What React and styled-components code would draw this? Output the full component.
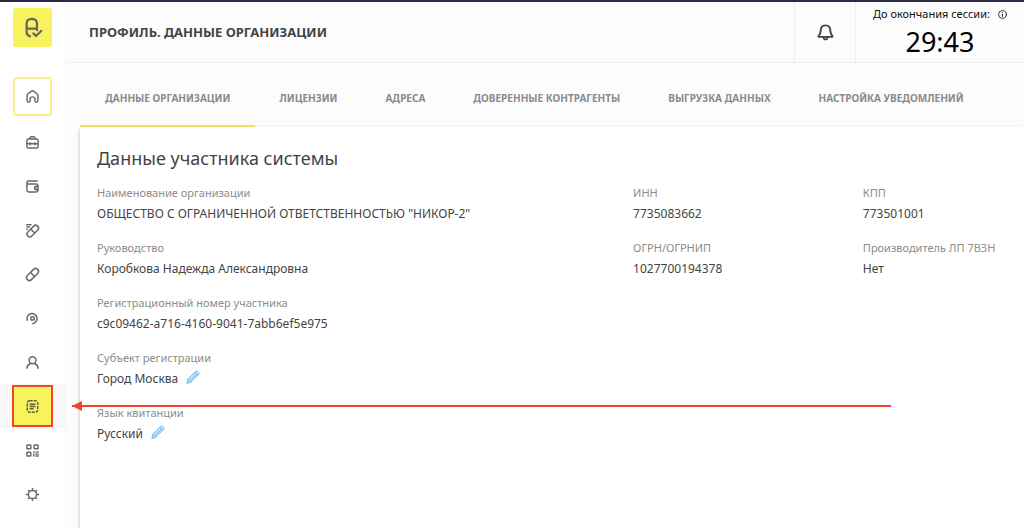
import styled, { createGlobalStyle } from 'styled-components';

const yellow = '#f8f25c';
const red = '#f0442c';
const line = '#eeeeee';

const GlobalStyle = createGlobalStyle`
    * {
        box-sizing: border-box;
    }
    body {
        margin: 0;
        background-color: #ffffff;
        color: #444444;
        font-family: 'Noto Sans', 'Open Sans', sans-serif;
        font-size: 12px;
    }
    button {
        font: inherit;
        color: inherit;
        background: none;
        border: 0;
        padding: 0;
        cursor: pointer;
    }
`;

const Page = styled.div`
    display: flex;
    min-height: 100vh;
    border-top: 2px solid #2c2a42;
    overflow: hidden;
`;

const Sidebar = styled.aside`
    flex: none;
    width: 65px;
    padding-top: 6px;
`;

const Logo = styled.a`
    display: flex;
    align-items: center;
    justify-content: center;
    width: 39px;
    height: 39px;
    margin: 0 auto 27px 13px;
    border-radius: 3px;
    background-color: ${yellow};
    color: #666666;
`;

const Nav = styled.nav`
    display: flex;
    flex-direction: column;
`;

const NavItem = styled.div`
    position: relative;
    display: flex;
    align-items: center;
    height: 44px;
    padding-left: 12px;
    background-color: ${({ $active }) => ($active ? '#f7f7f7' : 'transparent')};

    &:first-child {
        margin-bottom: 2px;
    }
`;

const NavButton = styled.button`
    display: flex;
    align-items: center;
    justify-content: center;
    width: 41px;
    height: 42px;
    color: #666a6e;

    &.home {
        width: 39px;
        height: 39px;
        margin-left: 1px;
        border: 1px solid ${yellow};
        box-shadow: inset 0 0 0 1px #faf590;
        border-radius: 3px;
    }

    &.marked {
        background-color: ${yellow};
        border: 2px solid ${red};
        color: #5c5c40;
    }
`;

const Arrow = styled.div`
    position: absolute;
    z-index: 2;
    top: 21px;
    left: 72px;
    width: 80vw;
    height: 2px;
    background-color: ${red};
    pointer-events: none;

    &::before {
        content: '';
        position: absolute;
        top: -4px;
        left: 0;
        border: 5px solid transparent;
        border-left: 0;
        border-right: 10px solid ${red};
    }
`;

const Main = styled.main`
    flex: 1;
    min-width: 0;
    display: flex;
    flex-direction: column;
    background-color: #fcfcfc;
    border-left: 1px solid #f7f7f7;
`;

const Header = styled.header`
    display: flex;
    height: 61px;
    border-bottom: 1px solid ${line};
`;

const PageTitle = styled.h1`
    flex: 1;
    align-self: center;
    margin: 0;
    padding-left: 23px;
    font-size: 13px;
    font-weight: 700;
`;

const BellButton = styled.button`
    display: flex;
    align-items: center;
    justify-content: center;
    width: 62px;
    border-left: 1px solid ${line};
    border-right: 1px solid ${line};
    color: #444444;
`;

const Session = styled.div`
    display: flex;
    flex-direction: column;
    align-items: center;
    width: 168px;
    padding-top: 4px;
    color: #111111;
`;

const SessionLabel = styled.div`
    display: flex;
    align-items: center;
    gap: 8px;
    font-size: 11px;
    line-height: 16px;
`;

const Timer = styled.time`
    font-size: 27px;
    line-height: 40px;
    color: #000000;
`;

const Tabs = styled.div`
    display: flex;
    height: 64px;
    padding-left: 14px;
`;

const Tab = styled.button`
    padding: 8px 24px 0;
    border-bottom: 2px solid ${({ $active }) => ($active ? '#f5e75a' : 'transparent')};
    color: #8a8a8a;
    font-size: 10px;
    font-weight: 700;
    white-space: nowrap;

    &:first-child {
        padding-left: 25px;
        padding-right: 25px;
    }
`;

const Card = styled.section`
    flex: 1;
    margin-left: 14px;
    padding: 18px 8px 0 17px;
    background-color: #ffffff;
    box-shadow: 0 2px 4px rgba(0, 0, 0, 0.25);
`;

const CardTitle = styled.h2`
    margin: 0 0 14px;
    font-size: 18px;
    font-weight: 400;
    line-height: 26px;
`;

const Fields = styled.dl`
    display: grid;
    grid-template-columns: 7fr 3fr 2fr;
    row-gap: 16px;
    margin: 0;
`;

const Field = styled.div`
    grid-column-start: ${({ $column }) => $column};
    white-space: nowrap;
`;

const Label = styled.dt`
    color: #8c8c8c;
    font-size: 11px;
    line-height: 16px;
`;

const Value = styled.dd`
    display: flex;
    align-items: center;
    gap: 8px;
    margin: 0;
    padding-top: 3px;
    line-height: 20px;
`;

const EditButton = styled.button`
    display: flex;
    padding-bottom: 4px;
`;

const Icon = styled.svg.attrs({
    fill: 'none',
    stroke: 'currentColor',
    strokeLinecap: 'round',
    strokeLinejoin: 'round',
    'aria-hidden': true,
})`
    display: block;
    overflow: visible;
    stroke-width: ${({ $stroke }) => $stroke || 1.6};
`;

const PencilIcon = styled(Icon)`
    color: #5fb0ee;
`;

const icons = {
    home: <path d="M1.2 5.8Q1.2 4.9 1.9 4.3L5.9 1.2Q7 .4 8.1 1.2L12.1 4.3Q12.8 4.9 12.8 5.8V11.3Q12.8 13.1 11.2 13.1Q9.6 13.1 9.6 11.3V9.6Q9.6 7.4 7 7.4Q4.4 7.4 4.4 9.6V11.3Q4.4 13.1 2.8 13.1Q1.2 13.1 1.2 11.3Z" />,
    briefcase: (
        <>
            <rect x="1" y="3.2" width="12" height="9.8" rx="1.8" />
            <path d="M4.4 3V2.4Q4.4 .8 5.8 .8H8.2Q9.6 .8 9.6 2.4V3M1.2 8.4H12.8M4.3 7.3V9.5M9.7 7.3V9.5" />
        </>
    ),
    wallet: (
        <>
            <path d="M12 1.2H2.7Q1 1.2 1 2.8V11Q1 12.8 2.9 12.8H11.1Q12.9 12.8 12.9 11V6Q12.9 4.3 11.1 4.3H2.5Q1 4.2 1 2.8" />
            <path d="M12.7 6.8H10.9Q9 6.9 9 8.6Q9 10.3 10.9 10.4H12.7M11 8.6H11.1" />
        </>
    ),
    pillFast: (
        <>
            <rect x="-.2" y="4.6" width="15" height="6" rx="3" transform="rotate(-45 7.3 7.6)" />
            <path d="M5.3 5.6L9.3 9.6M.9 .9H5.4M.9 3.3H3.6M.9 5.7H1.4" />
        </>
    ),
    pill: (
        <>
            <rect x="-.8" y="3.9" width="15.6" height="6.2" rx="3.1" transform="rotate(-45 7 7)" />
            <path d="M4.9 4.9L9.1 9.1" />
        </>
    ),
    rotate: (
        <>
            <path d="M1.4 8.8A5.4 5.4 0 1 1 7.4 12.4M1.4 8.8V9" />
            <rect x="5.3" y="5.3" width="3.4" height="3.4" rx=".4" />
        </>
    ),
    user: (
        <>
            <circle cx="7" cy="4.6" r="3.7" />
            <path d="M1 13.2C1 10.8 2.5 9.2 4.7 8.1M13 13.2C13 10.8 11.5 9.2 9.3 8.1" />
        </>
    ),
    document: (
        <>
            <rect x="1.4" y=".9" width="11.2" height="12.2" rx="2.6" strokeDasharray="3.2 1.1" strokeLinecap="butt" />
            <path d="M4.5 4.7H9.5M4.5 7H9.5M4.5 9.3H7.6" />
        </>
    ),
    qr: (
        <>
            <rect x="1" y="1" width="4.2" height="4.2" rx=".6" />
            <rect x="8.8" y="1" width="4.2" height="4.2" rx=".6" />
            <rect x="1" y="8.8" width="4.2" height="4.2" rx=".6" />
            <path d="M8.4 8.6H9.2M8.4 11V13M10.6 10.8H11.2M11.6 8.6H13M13 10.8V11.2M10.8 13H13" />
        </>
    ),
    gear: (
        <>
            <circle cx="7" cy="7" r="4.4" />
            <path d="M7 .6V2.2M7 11.8V13.4M.6 7H2.2M11.8 7H13.4M2.6 2.6L3.6 3.6M10.4 10.4L11.4 11.4M2.6 11.4L3.6 10.4M10.4 3.6L11.4 2.6" />
        </>
    ),
};

const navItems = [
    { icon: 'home', title: 'Главная', className: 'home' },
    { icon: 'briefcase', title: 'Организация' },
    { icon: 'wallet', title: 'Счета' },
    { icon: 'pillFast', title: 'Движение препаратов' },
    { icon: 'pill', title: 'Препараты' },
    { icon: 'rotate', title: 'Обращение' },
    { icon: 'user', title: 'Пользователи' },
    { icon: 'document', title: 'Документы', className: 'marked', active: true },
    { icon: 'qr', title: 'Коды' },
    { icon: 'gear', title: 'Настройки' },
];

const tabs = [
    'ДАННЫЕ ОРГАНИЗАЦИИ',
    'ЛИЦЕНЗИИ',
    'АДРЕСА',
    'ДОВЕРЕННЫЕ КОНТРАГЕНТЫ',
    'ВЫГРУЗКА ДАННЫХ',
    'НАСТРОЙКА УВЕДОМЛЕНИЙ',
];

const fields = [
    { label: 'Наименование организации', value: 'ОБЩЕСТВО С ОГРАНИЧЕННОЙ ОТВЕТСТВЕННОСТЬЮ "НИКОР-2"', column: 1 },
    { label: 'ИНН', value: '7735083662', column: 2 },
    { label: 'КПП', value: '773501001', column: 3 },
    { label: 'Руководство', value: 'Коробкова Надежда Александровна', column: 1 },
    { label: 'ОГРН/ОГРНИП', value: '1027700194378', column: 2 },
    { label: 'Производитель ЛП 7ВЗН', value: 'Нет', column: 3 },
    { label: 'Регистрационный номер участника', value: 'c9c09462-a716-4160-9041-7abb6ef5e975', column: 1 },
    { label: 'Субъект регистрации', value: 'Город Москва', column: 1, editable: true },
    { label: 'Язык квитанции', value: 'Русский', column: 1, editable: true },
];

const Pencil = () => (
    <PencilIcon width="14" height="14" viewBox="0 0 14 14" $stroke={1}>
        <path d="M1 13L2 9.2L9.8 1.4Q10.6 .6 11.5 1.4L12.6 2.5Q13.4 3.4 12.6 4.2L4.8 12Z" fill="#d5eafa" />
        <path d="M2 9.2L4.8 12M8.8 2.4L11.6 5.2M4 10.4L10.4 4" />
    </PencilIcon>
);

const App = () => {
    return (
        <>
            <GlobalStyle />
            <Page>
                <Sidebar>
                    <Logo href="#" aria-label="На главную">
                        <Icon width="21" height="21" viewBox="0 0 21 21" $stroke={2.2}>
                            <path d="M4.6 11.6H15V7Q15 1.8 9.8 1.8Q4.6 1.8 4.6 7V14.4Q4.6 18.2 8 19.4M15 11.6V13.2" />
                            <path d="M11.4 16.4L14 19L19.4 13.8" />
                        </Icon>
                    </Logo>
                    <Nav>
                        {navItems.map((item) => (
                            <NavItem key={item.icon} $active={item.active}>
                                <NavButton className={item.className} aria-label={item.title}>
                                    <Icon width="13" height="13" viewBox="0 0 14 14">
                                        {icons[item.icon]}
                                    </Icon>
                                </NavButton>
                                {item.active && <Arrow />}
                            </NavItem>
                        ))}
                    </Nav>
                </Sidebar>
                <Main>
                    <Header>
                        <PageTitle>ПРОФИЛЬ. ДАННЫЕ ОРГАНИЗАЦИИ</PageTitle>
                        <BellButton aria-label="Уведомления">
                            <Icon width="17" height="17" viewBox="0 0 18 18" $stroke={2}>
                                <path d="M2 13.6Q1.2 13.6 1.7 12.8Q3.8 10.6 3.9 7Q4 1.5 9 1.5Q14 1.5 14.1 7Q14.2 10.6 16.3 12.8Q16.8 13.6 16 13.6Z" />
                                <path d="M6.8 14.4Q7.2 16.4 9 16.4Q10.8 16.4 11.2 14.4" />
                            </Icon>
                        </BellButton>
                        <Session>
                            <SessionLabel>
                                До окончания сессии:
                                <Icon width="9" height="9" viewBox="0 0 9 9" $stroke={0.8}>
                                    <circle cx="4.5" cy="4.5" r="3.9" />
                                    <path d="M4.5 4.1V6.6M4.5 2.5V2.6" />
                                </Icon>
                            </SessionLabel>
                            <Timer>29:43</Timer>
                        </Session>
                    </Header>
                    <Tabs role="tablist">
                        {tabs.map((tab, index) => (
                            <Tab key={tab} role="tab" aria-selected={index === 0} $active={index === 0}>
                                {tab}
                            </Tab>
                        ))}
                    </Tabs>
                    <Card>
                        <CardTitle>Данные участника системы</CardTitle>
                        <Fields>
                            {fields.map((field) => (
                                <Field key={field.label} $column={field.column}>
                                    <Label>{field.label}</Label>
                                    <Value>
                                        {field.value}
                                        {field.editable && (
                                            <EditButton aria-label="Изменить">
                                                <Pencil />
                                            </EditButton>
                                        )}
                                    </Value>
                                </Field>
                            ))}
                        </Fields>
                    </Card>
                </Main>
            </Page>
        </>
    );
};

export default App;
